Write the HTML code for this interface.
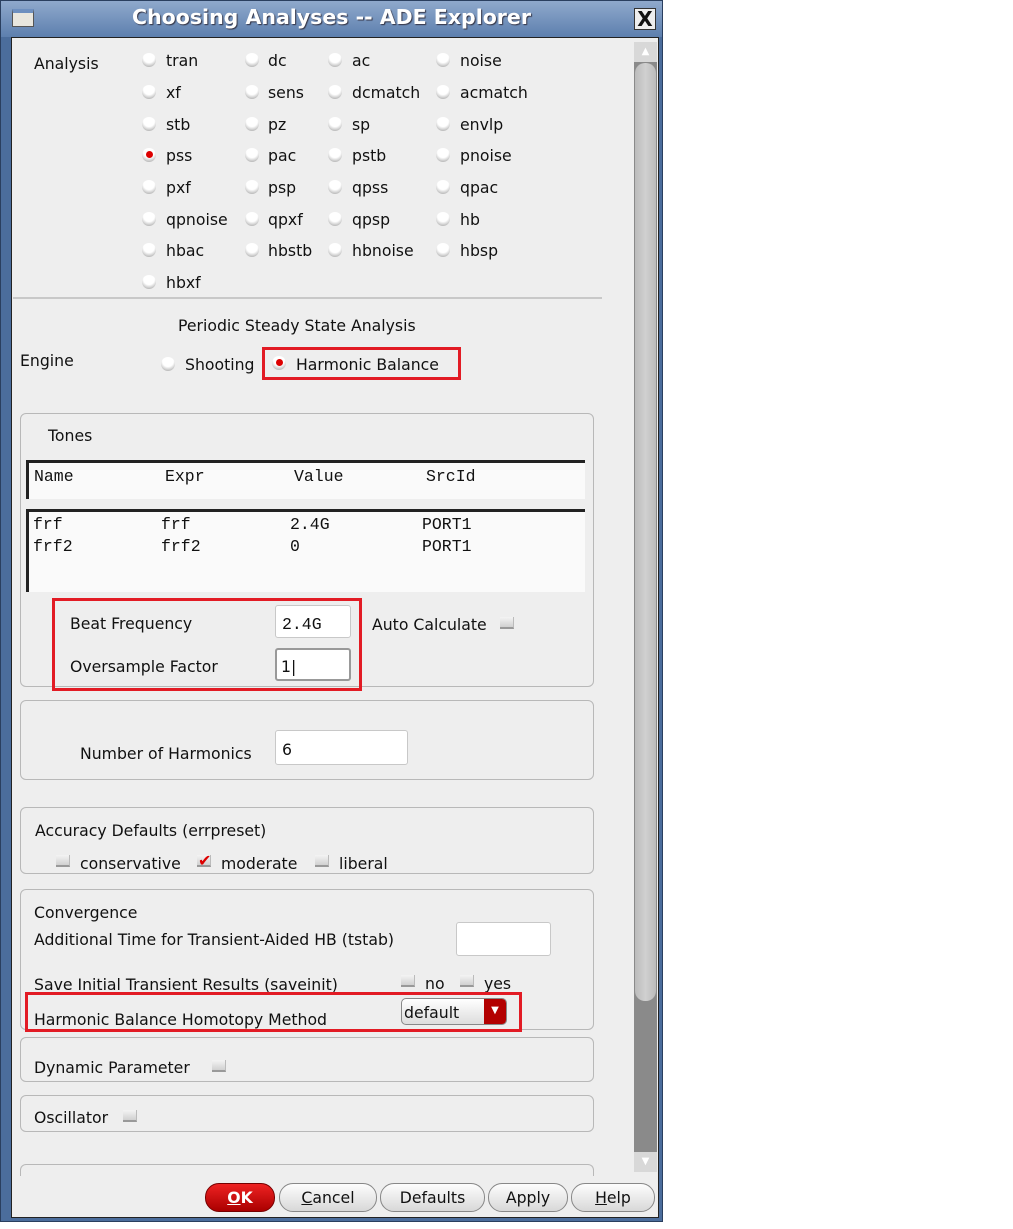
<!DOCTYPE html>
<html><head><meta charset="utf-8"><style>
*{margin:0;padding:0;box-sizing:border-box}
body{width:1013px;height:1229px;background:#fff;position:relative;overflow:hidden;font-family:"DejaVu Sans","Liberation Sans",sans-serif;font-size:15.7px;color:#111}
.a{position:absolute;white-space:nowrap}
.t{position:absolute;white-space:nowrap;line-height:18px;margin-top:1px}
.r{position:absolute;width:14px;height:14px;border-radius:50%;background:radial-gradient(circle at 50% 30%,#fff 45%,#bbb 80%,#888 100%)}
.r.on::after{content:"";position:absolute;left:4px;top:3px;width:7px;height:7px;border-radius:50%;background:#d00}
.cb{position:absolute;width:14px;height:12px;background:linear-gradient(#f4f4f4,#d0d0d0);border-bottom:2px solid #999;border-right:1px solid #bbb}
.grp{position:absolute;border:1px solid #b8b8b8;border-radius:6px}
.red{position:absolute;border:3px solid #e21b24}
.inp{position:absolute;background:#fff;border:1px solid #c8c8c8;border-radius:3px}
.mono{font-family:"Liberation Mono","DejaVu Sans Mono",monospace;font-size:16.5px}
.btn{position:absolute;top:1183px;height:29px;border:1px solid #888;border-radius:14px;background:linear-gradient(#fdfdfd,#d8d8d8);text-align:center;line-height:27px}
</style></head><body>
<div class="a" style="left:0;top:0;width:663px;height:1222px;background:#4b6d9c;border:1px solid #2a3f5f"></div>
<div class="a" style="left:1px;top:1px;width:661px;height:36px;background:linear-gradient(#8fa9cc,#5d7fae)"></div>
<div class="a" style="left:12px;top:9px;width:22px;height:18px;background:#e8e6de;border:1px solid #555;border-top:4px solid #6d8fbf"></div>
<div class="a" style="left:0;top:5px;width:663px;text-align:center;color:#fff;font-weight:bold;font-size:20.5px;text-shadow:1px 1px 1px #334">Choosing Analyses -- ADE Explorer</div>
<div class="a" style="left:634px;top:8px;width:22px;height:22px;background:#eee;border:1px solid #333;text-align:center;font-size:20px;line-height:20px;font-weight:bold">X</div>
<div class="a" style="left:11px;top:37px;width:648px;height:1181px;background:#eeeeee;border:1px solid #222"></div>
<div class="a" style="left:634px;top:42px;width:23px;height:1130px;background:#8a8a8a"></div>
<div class="a" style="left:634px;top:42px;width:23px;height:20px;background:#d8d8d8;text-align:center;font-size:10px;color:#fff;line-height:20px">▲</div>
<div class="a" style="left:635px;top:63px;width:21px;height:938px;background:linear-gradient(90deg,#bbb,#d0d0d0,#bbb);border-radius:10px"></div>
<div class="a" style="left:634px;top:1152px;width:23px;height:20px;background:#d8d8d8;text-align:center;font-size:10px;color:#fff;line-height:20px">▼</div>

<div class="t" style="left:34px;top:54px">Analysis</div>
<div class="r" style="left:142px;top:53px"></div><div class="t" style="left:166px;top:51px">tran</div>
<div class="r" style="left:245px;top:53px"></div><div class="t" style="left:268px;top:51px">dc</div>
<div class="r" style="left:328px;top:53px"></div><div class="t" style="left:352px;top:51px">ac</div>
<div class="r" style="left:436px;top:53px"></div><div class="t" style="left:460px;top:51px">noise</div>
<div class="r" style="left:142px;top:85px"></div><div class="t" style="left:166px;top:83px">xf</div>
<div class="r" style="left:245px;top:85px"></div><div class="t" style="left:268px;top:83px">sens</div>
<div class="r" style="left:328px;top:85px"></div><div class="t" style="left:352px;top:83px">dcmatch</div>
<div class="r" style="left:436px;top:85px"></div><div class="t" style="left:460px;top:83px">acmatch</div>
<div class="r" style="left:142px;top:117px"></div><div class="t" style="left:166px;top:115px">stb</div>
<div class="r" style="left:245px;top:117px"></div><div class="t" style="left:268px;top:115px">pz</div>
<div class="r" style="left:328px;top:117px"></div><div class="t" style="left:352px;top:115px">sp</div>
<div class="r" style="left:436px;top:117px"></div><div class="t" style="left:460px;top:115px">envlp</div>
<div class="r on" style="left:142px;top:148px"></div><div class="t" style="left:166px;top:146px">pss</div>
<div class="r" style="left:245px;top:148px"></div><div class="t" style="left:268px;top:146px">pac</div>
<div class="r" style="left:328px;top:148px"></div><div class="t" style="left:352px;top:146px">pstb</div>
<div class="r" style="left:436px;top:148px"></div><div class="t" style="left:460px;top:146px">pnoise</div>
<div class="r" style="left:142px;top:180px"></div><div class="t" style="left:166px;top:178px">pxf</div>
<div class="r" style="left:245px;top:180px"></div><div class="t" style="left:268px;top:178px">psp</div>
<div class="r" style="left:328px;top:180px"></div><div class="t" style="left:352px;top:178px">qpss</div>
<div class="r" style="left:436px;top:180px"></div><div class="t" style="left:460px;top:178px">qpac</div>
<div class="r" style="left:142px;top:212px"></div><div class="t" style="left:166px;top:210px">qpnoise</div>
<div class="r" style="left:245px;top:212px"></div><div class="t" style="left:268px;top:210px">qpxf</div>
<div class="r" style="left:328px;top:212px"></div><div class="t" style="left:352px;top:210px">qpsp</div>
<div class="r" style="left:436px;top:212px"></div><div class="t" style="left:460px;top:210px">hb</div>
<div class="r" style="left:142px;top:243px"></div><div class="t" style="left:166px;top:241px">hbac</div>
<div class="r" style="left:245px;top:243px"></div><div class="t" style="left:268px;top:241px">hbstb</div>
<div class="r" style="left:328px;top:243px"></div><div class="t" style="left:352px;top:241px">hbnoise</div>
<div class="r" style="left:436px;top:243px"></div><div class="t" style="left:460px;top:241px">hbsp</div>
<div class="r" style="left:142px;top:275px"></div><div class="t" style="left:166px;top:273px">hbxf</div>

<div class="a" style="left:13px;top:297px;width:589px;height:2px;background:#c8c8c8"></div>
<div class="t" style="left:178px;top:316px">Periodic Steady State Analysis</div>
<div class="t" style="left:20px;top:351px">Engine</div>
<div class="r" style="left:161px;top:357px"></div><div class="t" style="left:185px;top:355px">Shooting</div>
<div class="red" style="left:262px;top:347px;width:199px;height:33px"></div>
<div class="r on" style="left:272px;top:356px"></div><div class="t" style="left:296px;top:355px">Harmonic Balance</div>

<div class="grp" style="left:20px;top:413px;width:574px;height:274px"></div>
<div class="t" style="left:48px;top:426px">Tones</div>
<div class="a" style="left:26px;top:460px;width:559px;height:39px;background:#fafafa;border-top:3px solid #222;border-left:3px solid #222"></div>
<div class="t mono" style="left:34px;top:467px">Name</div>
<div class="t mono" style="left:165px;top:467px">Expr</div>
<div class="t mono" style="left:294px;top:467px">Value</div>
<div class="t mono" style="left:426px;top:467px">SrcId</div>
<div class="a" style="left:26px;top:509px;width:559px;height:83px;background:#fafafa;border-top:3px solid #222;border-left:3px solid #222"></div>
<div class="t mono" style="left:33px;top:515px">frf</div>
<div class="t mono" style="left:161px;top:515px">frf</div>
<div class="t mono" style="left:290px;top:515px">2.4G</div>
<div class="t mono" style="left:422px;top:515px">PORT1</div>
<div class="t mono" style="left:33px;top:537px">frf2</div>
<div class="t mono" style="left:161px;top:537px">frf2</div>
<div class="t mono" style="left:290px;top:537px">0</div>
<div class="t mono" style="left:422px;top:537px">PORT1</div>
<div class="red" style="left:52px;top:598px;width:310px;height:93px"></div>
<div class="t" style="left:70px;top:614px">Beat Frequency</div>
<div class="inp" style="left:275px;top:605px;width:76px;height:33px"></div>
<div class="t mono" style="left:282px;top:615px">2.4G</div>
<div class="t" style="left:372px;top:615px">Auto Calculate</div>
<div class="cb" style="left:500px;top:617px"></div>
<div class="t" style="left:70px;top:657px">Oversample Factor</div>
<div class="inp" style="left:275px;top:648px;width:76px;height:33px;border:2px solid #999"></div>
<div class="t" style="left:281px;top:657px">1|</div>

<div class="grp" style="left:20px;top:700px;width:574px;height:80px"></div>
<div class="t" style="left:80px;top:744px">Number of Harmonics</div>
<div class="inp" style="left:275px;top:730px;width:133px;height:35px"></div>
<div class="t" style="left:282px;top:740px">6</div>

<div class="grp" style="left:20px;top:807px;width:574px;height:67px"></div>
<div class="t" style="left:35px;top:821px">Accuracy Defaults (errpreset)</div>
<div class="cb" style="left:56px;top:855px"></div><div class="t" style="left:80px;top:854px">conservative</div>
<div class="cb" style="left:197px;top:855px"></div><div class="a" style="left:198px;top:851px;color:#d00;font-size:16px;font-weight:bold">✔</div><div class="t" style="left:221px;top:854px">moderate</div>
<div class="cb" style="left:315px;top:855px"></div><div class="t" style="left:339px;top:854px">liberal</div>

<div class="grp" style="left:20px;top:889px;width:574px;height:141px"></div>
<div class="t" style="left:34px;top:903px">Convergence</div>
<div class="t" style="left:34px;top:930px">Additional Time for Transient-Aided HB (tstab)</div>
<div class="inp" style="left:456px;top:922px;width:95px;height:34px"></div>
<div class="t" style="left:34px;top:975px">Save Initial Transient Results (saveinit)</div>
<div class="cb" style="left:401px;top:975px"></div><div class="t" style="left:425px;top:974px">no</div>
<div class="cb" style="left:460px;top:975px"></div><div class="t" style="left:484px;top:974px">yes</div>
<div class="red" style="left:25px;top:992px;width:497px;height:40px"></div>
<div class="t" style="left:34px;top:1010px">Harmonic Balance Homotopy Method</div>
<div class="a" style="left:401px;top:998px;width:106px;height:27px;border:1px solid #888;border-radius:5px;background:linear-gradient(#fff,#ddd);overflow:hidden">
<div class="t" style="left:2px;top:4px">default</div>
<div class="a" style="right:0;top:0;width:22px;height:27px;background:#b30000;color:#fff;font-size:10px;text-align:center;line-height:24px">▼</div></div>

<div class="grp" style="left:20px;top:1037px;width:574px;height:45px"></div>
<div class="t" style="left:34px;top:1058px">Dynamic Parameter</div>
<div class="cb" style="left:212px;top:1060px"></div>
<div class="grp" style="left:20px;top:1095px;width:574px;height:37px"></div>
<div class="t" style="left:34px;top:1108px">Oscillator</div>
<div class="cb" style="left:123px;top:1110px"></div>
<div class="a" style="left:20px;top:1164px;width:574px;height:12px;border:1px solid #b8b8b8;border-bottom:none;border-radius:6px 6px 0 0"></div>

<div class="btn" style="left:205px;width:70px;background:linear-gradient(#e22,#a00);color:#fff;font-weight:bold;border-color:#700"><u>O</u>K</div>
<div class="btn" style="left:279px;width:98px"><u>C</u>ancel</div>
<div class="btn" style="left:380px;width:105px">Defaults</div>
<div class="btn" style="left:488px;width:80px">Apply</div>
<div class="btn" style="left:571px;width:84px"><u>H</u>elp</div>
</body></html>
